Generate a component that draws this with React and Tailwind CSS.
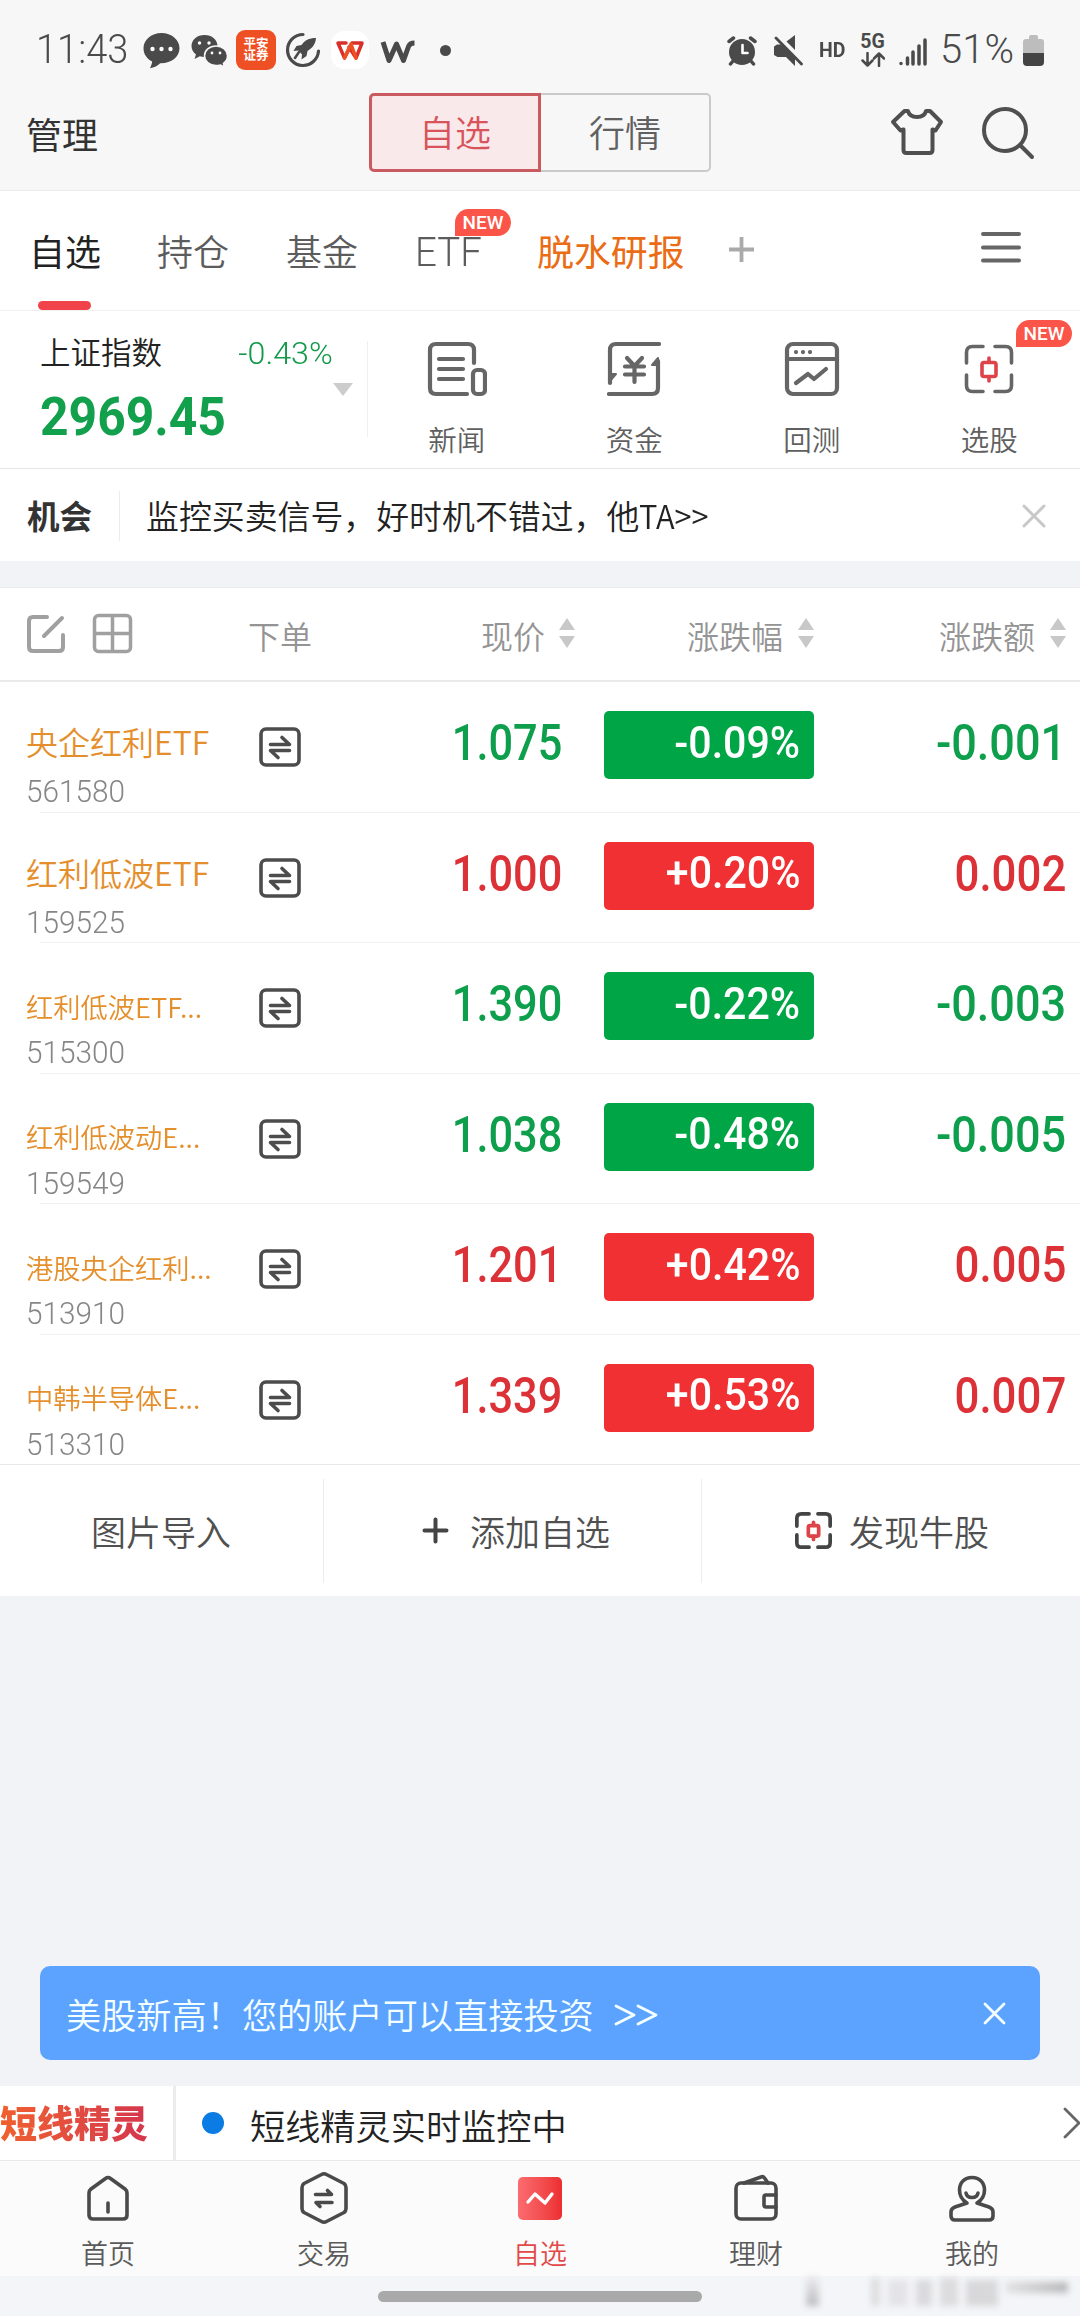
import React from "react";

const CJK = "font-['Noto_Sans_CJK_SC',sans-serif]";
const NUM = "font-['Roboto',sans-serif]";

function Svg({ w, h, children, className = "", sw = 4, stroke = "#666" }) {
  return (
    <svg width={w} height={h} viewBox={`0 0 ${w} ${h}`} fill="none" stroke={stroke} strokeWidth={sw} strokeLinecap="round" strokeLinejoin="round" className={`block shrink-0 ${className}`}>
      {children}
    </svg>
  );
}

function StatusBar() {
  return (
    <div className="flex h-[85px] items-start justify-between pl-[36px] pr-[36px] pt-[29px] text-[#4a4a4a]">
      <div className="flex h-[42px] items-center">
        <span className={`${NUM} w-[107px] whitespace-nowrap text-[40px] font-[350] leading-none`}>
          <span className="inline-block origin-left scale-x-[0.95]">11:43</span>
        </span>
        <Svg w={37} h={37} stroke="none">
          <path d="M18.500 1C8.500 1 .5 7.700.5 16.200c0 6 3.500 10.600 8.700 13.200-.3 2.600-1.200 4.700-2.300 6.900 4.400-.7 7.800-2.700 10.200-5.100C28 31.600 36.500 25 36.500 16.200 36.500 7.700 28.500 1 18.500 1z" fill="#4a4a4a" />
          <circle cx="9.500" cy="17" r="2.200" fill="#fff" />
          <circle cx="18.500" cy="17" r="2.200" fill="#fff" />
          <circle cx="27.500" cy="17" r="2.200" fill="#fff" />
        </Svg>
        <Svg w={37} h={33} stroke="none" className="ml-[11px]">
          <path d="M13.500 1C6 1 .5 5.800.5 12c0 3.600 1.700 6.400 4.500 8.500L3.500 25l5.300-2.700c2 .6 3.500.8 5.500.7C20 22 26 18 26.500 12 26.500 5.800 21 1 13.500 1z" fill="#4a4a4a" />
          <path d="M25 12c-6.600 0-11.500 4.300-11.500 9.700S18.400 31.500 25 31.500c1.500 0 2.900-.2 4.200-.6l4.300 2.100-1.100-3.700c2.500-1.800 4.100-4.500 4.100-7.600C36.500 16.300 31.600 12 25 12z" fill="#4a4a4a" stroke="#f7f7f7" strokeWidth="1.500" />
          <circle cx="8.500" cy="9" r="1.700" fill="#fff" />
          <circle cx="18" cy="9" r="1.700" fill="#fff" />
          <circle cx="21" cy="19" r="1.400" fill="#fff" />
          <circle cx="29" cy="19" r="1.400" fill="#fff" />
        </Svg>
        <div className={`${CJK} ml-[8px] flex h-[40px] w-[40px] items-center justify-center rounded-[9px] bg-[#ee5023] pb-[2px] text-center text-[12.500px] font-bold leading-[12px] text-white`}>
          <span className="w-[26px]">平安证券</span>
        </div>
        <Svg w={36} h={36} sw={3.200} stroke="#4a4a4a" className="ml-[9px]">
          <path d="M18 2.500A15.500 15.500 0 1 0 33.500 19" />
          <path d="M31 6c-7 0-11.500 2.500-14.500 7l-5 1-3 5 5-.5 3.500 4-.5 5 5-3.500 1-5C27.500 16 30.500 12 31 6z" fill="#4a4a4a" stroke="none" />
          <path d="M14 20l-4 6" strokeWidth="2.500" />
        </Svg>
        <div className="ml-[10px] flex h-[38px] w-[38px] items-center justify-center rounded-[14px] bg-white">
          <Svg w={30} h={21} sw={3.500} stroke="#d9302a">
            <path d="M3 3h8M3 3l6.500 15L17 3h10l-6 15-7-11" />
            <path d="M9.500 18L16 4l5 14" stroke="#ee5023" />
          </Svg>
        </div>
        <Svg w={36} h={24} sw={5} stroke="#4a4a4a" className="ml-[11px] mt-[3px]">
          <path d="M3 2l6 18.500L16.500 4l7 16.500 5-14c1-2.800 2.500-3.500 6-3.500" strokeLinecap="butt" />
        </Svg>
        <span className="ml-[24px] h-[11px] w-[11px] rounded-full bg-[#4a4a4a]" />
      </div>
      <div className="flex h-[42px] items-center">
        <Svg w={30} h={31} sw={3.500} stroke="#4a4a4a">
          <circle cx="15" cy="17" r="13" fill="#4a4a4a" stroke="none" />
          <path d="M2 6.500L6.500 3M28 6.500L23.500 3M6 26l-2.500 3M24 26l2.500 3" />
          <path d="M15.500 10v8h5" stroke="#fff" strokeWidth="2.600" />
        </Svg>
        <Svg w={30} h={31} sw={2.800} stroke="#4a4a4a" className="ml-[16px]">
          <path d="M1 11.500l3-2h4L22 23v8l-9-9H4.500L1 20z" fill="#4a4a4a" stroke="none" />
          <path d="M13.500 6.500L22 0v15z" fill="#4a4a4a" stroke="none" />
          <path d="M3 3l25.500 26" />
        </Svg>
        <span className={`${NUM} ml-[16px] w-[41px] text-[20.500px] font-bold leading-none`}>
          <span className="inline-block origin-left scale-x-[0.95]">HD</span>
        </span>
        <span className={`${NUM} flex w-[25px] flex-col items-center text-[19.500px] font-bold leading-[17px]`}>
          5G
          <Svg w={24} h={15} sw={2.500} stroke="#4a4a4a" className="mt-[2px]">
            <path d="M6.500 1v12M1.500 8.500l5 5 5-5M18 14V2M13 6.500l5-5 5 5" />
          </Svg>
        </span>
        <Svg w={28} h={28} sw={3.500} stroke="#4a4a4a" className="ml-[14px] mt-1">
          <path d="M2 25.500v.1M8.500 20v6M14 14v12M20 8v18M26 2v24" />
        </Svg>
        <span className={`${NUM} ml-[13px] w-[83px] whitespace-nowrap text-[40px] font-[350] leading-none`}>
          <span className="inline-block origin-left">51%</span>
        </span>
        <Svg w={21} h={31} stroke="none">
          <path d="M6 2q0-2 2-2h5q2 0 2 2v2h3q3 0 3 3v11H0V7q0-3 3-3h3z" fill="#bdbdbd" />
          <path d="M0 18h21v9q0 4-4 4H4q-4 0-4-4z" fill="#444" />
        </Svg>
      </div>
    </div>
  );
}

function Header() {
  return (
    <div className="flex h-[106px] items-start border-b border-[#ebebeb]">
      <span className="mt-[30px] w-[369px] pl-[26px] text-[36px] leading-none text-[#333]">管理</span>
      <div className="mt-[8px] flex h-[79px] w-[342px] text-[36px] leading-none">
        <div className="flex w-[172px] items-center justify-center rounded-l-[5px] border-[3px] border-[#c95a5f] bg-[#fae9eb] pb-[3px] font-[350] text-[#d8535a]">自选</div>
        <div className="flex w-[170px] items-center justify-center rounded-r-[5px] border-2 border-l-0 border-[#cacaca] pb-[3px] font-[350] text-[#606060]">行情</div>
      </div>
      <Svg w={54} h={48} sw={4} stroke="#4f4f4f" className="ml-[179px] mt-[23px]">
        <path d="M14.500 3L3 14l7.500 8.500 3-1V42q0 3 3 3h23q3 0 3-3V21.500l3 1L51 14 40 3h-4c-1 4-4.500 6-9 6s-8-2-9-6z" />
      </Svg>
      <Svg w={54} h={54} sw={4} stroke="#4f4f4f" className="ml-[38px] mt-[21px]">
        <circle cx="23" cy="24" r="21" />
        <path d="M38 39l12 12" />
      </Svg>
    </div>
  );
}

function NewBadge({ className }) {
  return (
    <span className={`${NUM} absolute flex h-[27px] w-[56px] items-center justify-center rounded-full rounded-bl-none bg-[#fb5549] text-[19px] font-medium leading-none text-white ${className}`}>
      NEW
    </span>
  );
}

function Tabs() {
  return (
    <div className="flex h-[120px] items-start border-b border-[#f0f0f0] text-[36px] font-[350] leading-none text-[#5c5c5c]">
      <div className="flex h-full w-[157px] flex-col pl-[30px] pt-[41px] font-normal text-[#222]">
        <span className="-ml-px">自选</span>
        <span className="ml-[8px] mt-[33px] h-[9px] w-[53px] rounded-full bg-[#f0444a]" />
      </div>
      <span className="w-[129px] pt-[41px]">持仓</span>
      <span className="w-[129px] pt-[41px]">基金</span>
      <span className={`${NUM} relative w-[122px] pt-[42px] text-[40px] font-light`}>
        <span className="inline-block origin-left scale-x-[0.96]">ETF</span>
        <NewBadge className="left-[40px] top-[18px]" />
      </span>
      <span className="w-[191px] pt-[41px] text-[36.900px] font-normal text-[#ea6c14]">脱水研报</span>
      <Svg w={27} h={27} sw={3.800} stroke="#aaa" className="mt-[45px]">
        <path d="M1 13.500h25M13.500 1v25" strokeLinecap="butt" />
      </Svg>
      <Svg w={42} h={34} sw={4} stroke="#666" className="ml-[225px] mt-[39px]">
        <path d="M3 4h36M3 17.500h36M3 30.500h36" />
      </Svg>
    </div>
  );
}

function ScanIcon({ dark = "#666", size = 50, sw = 3.600 }) {
  return (
    <svg width={size} height={size} viewBox="0 0 50 50" fill="none" stroke={dark} strokeWidth={sw} strokeLinecap="round" className="block shrink-0">
      <path d="M2.500 19V8.500q0-6 6-6H19M31 2.500h10.500q6 0 6 6V19M47.500 31v10.500q0 6-6 6H31M19 47.500H8.500q-6 0-6-6V31" />
      <g stroke="#dd4348">
        <rect x="18" y="18.500" width="14" height="14" rx="2" />
        <path d="M25 14v4M25 33v4" />
      </g>
    </svg>
  );
}

const shortcuts = [
  {
    label: "新闻",
    icon: (
      <Svg w={60} h={56} sw={4.200}>
        <path d="M47 22V9q0-6-6-6H9Q3 3 3 9v38q0 6 6 6h31" />
        <path d="M12 18h24M12 28h24M12 38h24" />
        <rect x="46" y="29" width="12" height="24" rx="4" />
      </Svg>
    ),
  },
  {
    label: "资金",
    icon: (
      <Svg w={54} h={56} sw={4.200}>
        <path d="M52 3H9Q3 3 3 9v33M2 53h43q6 0 6-6V20" />
        <path d="M3 33h6l-6 7zM51 17l-6 7h6z" fill="#666" strokeWidth="2" />
        <path d="M20 17l7.500 8 7.500-8M27.500 25v16M18 25.500h19M18 33.500h19" />
      </Svg>
    ),
  },
  {
    label: "回测",
    icon: (
      <Svg w={56} h={56} sw={4.200}>
        <rect x="3" y="3" width="50" height="50" rx="6" />
        <path d="M3 18h50" />
        <path d="M12 42l12-9 6 5 12-10" />
        <path d="M12 11v.1M19 11v.1M26 11v.1" />
      </Svg>
    ),
  },
  { label: "选股", icon: <ScanIcon />, isNew: true },
];

function IndexPanel() {
  return (
    <div className="flex h-[158px] items-start border-b border-[#e6e6e6]">
      <div className="flex w-[367px] flex-col pl-[40px]">
        <div className="mt-[25px] flex h-[30px] items-center justify-between pr-[34px]">
          <span className="text-[30.500px] font-[350] leading-none text-[#222]">上证指数</span>
          <span className={`${NUM} origin-right scale-x-[1.04] pt-[4px] text-[31px] font-light leading-none text-[#12994a]`}>-0.43%</span>
        </div>
        <div className="flex justify-between pr-[14px]">
          <span className={`${NUM} mt-[25px] origin-left scale-x-[0.94] text-[53px] font-bold leading-none text-[#12a04c]`}>2969.45</span>
          <Svg w={20} h={13} stroke="none" className="mt-[17px]">
            <path d="M0 0h20L10 13z" fill="#ccc" />
          </Svg>
        </div>
      </div>
      <span className="mt-[30px] h-[96px] w-px bg-[#efefef]" />
      <div className="flex flex-1 pr-[2px]">
        {shortcuts.map((s) => (
          <div key={s.label} className="relative flex flex-1 flex-col items-center pt-[30px]">
            <div className="flex h-[56px] items-center">{s.icon}</div>
            <span className="mt-[28px] text-[28.500px] font-[350] leading-none text-[#606060]">{s.label}</span>
            {s.isNew && <NewBadge className="right-[6px] top-[9px]" />}
          </div>
        ))}
      </div>
    </div>
  );
}

function Notice() {
  return (
    <div className="flex h-[92px] items-center pt-[1px] leading-none text-[#333]">
      <span className="w-[119px] pl-[27px] text-[32.500px] font-bold">机会</span>
      <span className="h-[50px] w-px bg-[#ececec]" />
      <span className="ml-[26px] flex-1 text-[32.900px] font-[350] text-[#222]">
        监控买卖信号，好时机不错过，他<span className="inline-block origin-left scale-x-[0.94]">TA&gt;&gt;</span>
      </span>
      <Svg w={24} h={24} sw={3} stroke="#c8c8c8" className="mr-[34px]">
        <path d="M2 2l20 20M22 2L2 22" />
      </Svg>
    </div>
  );
}

function SortArrows({ className }) {
  return (
    <Svg w={16} h={30} stroke="none" className={className}>
      <path d="M8 0l8 12H0zM8 30l8-12H0z" fill="#c8c8c8" />
    </Svg>
  );
}

function TableHead() {
  return (
    <div className="flex h-[95px] items-center border-b-2 border-t border-[#eaeaea] bg-white pt-[1px] text-[32px] font-[350] leading-none text-[#949494]">
      <Svg w={40} h={40} sw={4} stroke="#a0a0a0" className="mb-[3px] ml-[26px]">
        <path d="M21 4H7Q3 4 3 8v26q0 4 4 4h26q4 0 4-4V22M18 23L36 5" />
      </Svg>
      <Svg w={41} h={41} sw={3.500} stroke="#a0a0a0" className="mb-[3px] ml-[26px]">
        <rect x="2.500" y="2.500" width="36" height="36" rx="4" />
        <path d="M20.500 3v35M3 20.500h35" />
      </Svg>
      <span className="ml-[115px]">下单</span>
      <span className="ml-[169px]">现价</span>
      <SortArrows className="mb-[4px] ml-[14px]" />
      <span className="ml-[112px]">涨跌幅</span>
      <SortArrows className="mb-[4px] ml-[15px]" />
      <span className="ml-[125px]">涨跌额</span>
      <SortArrows className="mb-[4px] ml-[15px]" />
    </div>
  );
}

const stocks = [
  { name: "央企红利ETF", code: "561580", price: "1.075", pct: "-0.09%", chg: "-0.001" },
  { name: "红利低波ETF", code: "159525", price: "1.000", pct: "+0.20%", chg: "0.002", up: true },
  { name: "红利低波ETF...", code: "515300", price: "1.390", pct: "-0.22%", chg: "-0.003", small: true },
  { name: "红利低波动E...", code: "159549", price: "1.038", pct: "-0.48%", chg: "-0.005", small: true },
  { name: "港股央企红利...", code: "513910", price: "1.201", pct: "+0.42%", chg: "0.005", up: true, small: true },
  { name: "中韩半导体E...", code: "513310", price: "1.339", pct: "+0.53%", chg: "0.007", up: true, small: true },
];

function StockRow({ s, last }) {
  const tone = s.up ? "text-[#dc3237]" : "text-[#0d9f4b]";
  return (
    <div className="flex h-[130.500px] flex-col bg-white">
      <div className="flex flex-1 items-start">
        <div className="w-[259px] pl-[26px]">
          <div className={`mt-[41px] flex h-[36px] items-center whitespace-nowrap font-[350] leading-none text-[#e58f2c] ${s.small ? "pt-[8px] text-[27px]" : "text-[32px]"}`}>
            <span className={s.small ? "inline-block origin-left scale-x-[1.01]" : "inline-block origin-left"}>{s.name}</span>
          </div>
          <div className={`${NUM} mt-[16px] flex h-[32px] items-center text-[32px] font-light leading-none text-[#868686]`}>
            <span className="inline-block origin-left scale-x-[0.93]">{s.code}</span>
          </div>
        </div>
        <Svg w={42} h={40} sw={3.600} stroke="#4c4c4c" className="mt-[45px]">
          <rect x="2" y="2" width="38" height="36" rx="5" />
          <path d="M11.500 17.500h19L23 10.500M30.500 23.500h-19l7.500 7" />
        </Svg>
        <div className={`${NUM} mt-[28px] flex h-[68px] w-[261px] items-center justify-end text-[49.500px] font-medium leading-none ${tone}`}>
          <span className="inline-block origin-right scale-x-[0.875]">{s.price}</span>
        </div>
        <div className={`${NUM} ml-[42px] mt-[29px] flex h-[68px] w-[210px] items-center justify-end rounded-[5px] pb-[3px] pr-[14px] text-[43.500px] font-medium leading-none text-white ${s.up ? "bg-[#f03032]" : "bg-[#00a546]"}`}>
          <span className="inline-block origin-right scale-x-[0.945]">{s.pct}</span>
        </div>
        <div className={`${NUM} mt-[28px] flex h-[68px] flex-1 items-center justify-end pr-[14px] text-[49.500px] font-medium leading-none ${tone}`}>
          <span className={s.up ? "inline-block origin-right scale-x-[0.885]" : "inline-block origin-right scale-x-[0.91]"}>{s.chg}</span>
        </div>
      </div>
      <span className={last ? "h-px bg-[#e8e8e8]" : "ml-[40px] h-px bg-[#f0f0f0]"} />
    </div>
  );
}

function Actions() {
  return (
    <div className="flex h-[131.400px] items-center bg-white text-[35px] font-[350] leading-none text-[#505050]">
      <span className="w-[323px] pl-[91px]">图片导入</span>
      <span className="h-[104px] w-px bg-[#ececec]" />
      <div className="flex w-[377px] items-center pl-[98px]">
        <Svg w={27} h={27} sw={4} stroke="#444">
          <path d="M2.500 13.500h22M13.500 2.500v22" />
        </Svg>
        <span className="ml-[21px]">添加自选</span>
      </div>
      <span className="h-[104px] w-px bg-[#ececec]" />
      <div className="flex flex-1 items-center pl-[93px]">
        <ScanIcon dark="#444" size={37} sw={5} />
        <span className="ml-[17px]">发现牛股</span>
      </div>
    </div>
  );
}

function Banner() {
  return (
    <div className="mx-[40px] mt-[370px] flex h-[94px] items-center rounded-[10px] bg-[#5ca3ff] pl-[26px] pr-[34px] text-[35.200px] font-[350] leading-none text-[#f4ffff]">
      <span className="flex-1 whitespace-pre">美股新高！您的账户可以直接投资</span>
      <Svg w={44} h={22} sw={2.800} stroke="#f4ffff" className="mr-[325px] mt-1">
        <path d="M2 2l18 9-18 9M24 2l18 9-18 9" />
      </Svg>
      <Svg w={23} h={23} sw={2.800} stroke="#f4ffff">
        <path d="M2 2l19 19M21 2L2 21" />
      </Svg>
    </div>
  );
}

function Ticker() {
  return (
    <div className="mt-[26px] flex h-[74px] items-center overflow-hidden bg-white pt-[2px] text-[35.200px] leading-none text-[#333]">
      <span className="w-[173px] whitespace-nowrap bg-gradient-to-r from-[#f0602d] to-[#d02d4f] bg-clip-text pb-[4px] text-[37px] font-black text-transparent">短线精灵</span>
      <span className="-mt-[2px] h-[74px] w-[3px] bg-[#ececec]" />
      <span className="mb-[3px] ml-[26px] h-[22px] w-[22px] rounded-full bg-[#0a7ce4]" />
      <span className="ml-[26px] flex-1 font-[350] text-[#222]">短线精灵实时监控中</span>
      <Svg w={17} h={32} sw={2.800} stroke="#666" className="mb-[3px]">
        <path d="M2 2l14 14L2 30" />
      </Svg>
    </div>
  );
}

const nav = [
  {
    label: "首页",
    icon: (
      <Svg w={42} h={46} stroke="#4a4a4a" sw={3.600}>
        <path d="M18.500 3.500q2.500-2 5 0L38 14q2 1.500 2 4v22q0 4-4 4H6q-4 0-4-4V18q0-2.500 2-4z" />
        <path d="M21 28v9" />
      </Svg>
    ),
  },
  {
    label: "交易",
    icon: (
      <Svg w={48} h={54} stroke="#4a4a4a" sw={3.600}>
        <path d="M21.500 3.500q2.500-1.500 5 0L44 12.500q2 1.500 2 4v21q0 2.500-2 4l-17.500 9q-2.500 1.500-5 0L4 41.500q-2-1.500-2-4v-21q0-2.500 2-4z" />
        <path d="M15.500 23.500h16l-4-4M32 31.500H16l4 4" />
      </Svg>
    ),
  },
  {
    label: "自选",
    active: true,
    icon: (
      <div className="flex h-[43px] w-[44px] items-center justify-center rounded-[5px] bg-gradient-to-r from-[#fb6b70] to-[#ec2d30]">
        <Svg w={30} h={16} stroke="#fff" sw={3.400}>
          <path d="M3 12l7-8 10 9 7-9" />
        </Svg>
      </div>
    ),
  },
  {
    label: "理财",
    icon: (
      <Svg w={46} h={48} stroke="#4a4a4a" sw={3.600}>
        <rect x="3" y="9" width="40" height="36" rx="5" />
        <path d="M11 9l17-6q2-1 3.500 1L35 9M43 21H33q-2 0-2 2v8q0 2 2 2h10" />
      </Svg>
    ),
  },
  {
    label: "我的",
    icon: (
      <Svg w={46} h={47} stroke="#4a4a4a" sw={3.600}>
        <path d="M18 28C13 25 10.500 20.500 10.500 15c0-7.500 5-12.500 12.500-12.500S35.500 7.500 35.500 15c0 5.500-2.500 10-7.500 13l12 4q4 1.500 4 5v4q0 4-4 4H6q-4 0-4-4v-4q0-3.500 4-5z" />
        <path d="M17 18c1 6 11 6 12 0" />
      </Svg>
    ),
  },
];

function BottomNav() {
  return (
    <div className="flex h-[116px] border-t border-[#e9e9e9] bg-[#fbfbfb]">
      {nav.map((n) => (
        <div key={n.label} className="flex flex-1 flex-col items-center pt-[10px]">
          <div className="flex h-[54px] items-center">{n.icon}</div>
          <span className={`mt-[14px] text-[27px] font-[350] leading-none ${n.active ? "text-[#e24a4a]" : "text-[#5a5a5a]"}`}>{n.label}</span>
        </div>
      ))}
    </div>
  );
}

function HomeIndicator() {
  return (
    <div className="relative flex h-[40px] justify-center bg-[#f4f5f8] pt-[15px]">
      <span className="h-[11px] w-[324px] rounded-full bg-[#a9a9a9]" />
      <div className="absolute bottom-[10px] right-[12px] flex h-[30px] w-[262px] items-end gap-[8px] blur-[3px]">
        <span className="h-[30px] w-[13px] bg-gradient-to-b from-[#ededef] to-[#bcbcbe]" />
        <span className="ml-[44px] h-[28px] w-[9px] bg-[#dededf]" />
        <span className="h-[26px] w-[20px] bg-[#e4e4e6]" />
        <span className="h-[26px] w-[16px] bg-[#dadadc]" />
        <span className="h-[28px] w-[18px] bg-[#dcdcde]" />
        <span className="h-[26px] w-[32px] bg-[#d8d8da]" />
        <span className="mb-[13px] h-[11px] flex-1 bg-gradient-to-r from-[#e2e2e3] to-[#b9b9ba]" />
      </div>
    </div>
  );
}

export default function App() {
  return (
    <div className={`${CJK} flex h-[2316px] w-[1080px] flex-col overflow-hidden bg-[#f2f3f6]`}>
      <div className="bg-[#f7f7f7]">
        <StatusBar />
        <Header />
      </div>
      <div className="bg-white">
        <Tabs />
        <IndexPanel />
        <Notice />
      </div>
      <div className="mt-[26px]">
        <TableHead />
        {stocks.map((s, i) => (
          <StockRow key={s.code} s={s} last={i === stocks.length - 1} />
        ))}
        <Actions />
      </div>
      <Banner />
      <Ticker />
      <BottomNav />
      <HomeIndicator />
    </div>
  );
}
